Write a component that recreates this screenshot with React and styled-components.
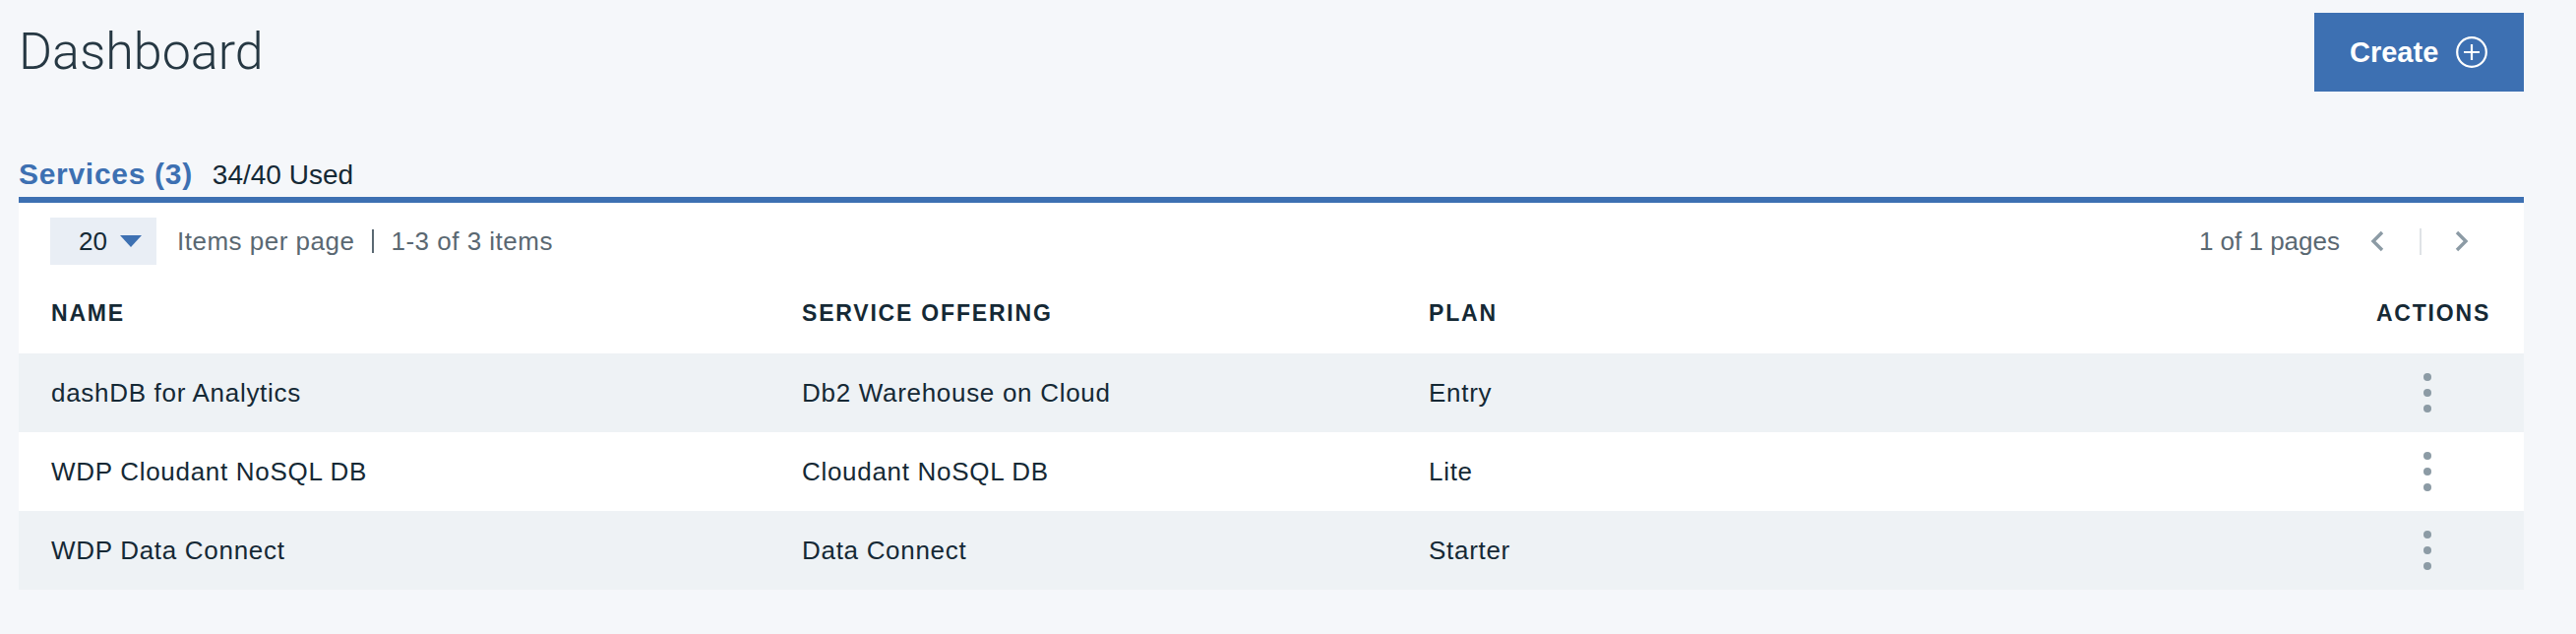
import styled, { createGlobalStyle } from "styled-components";

const GlobalStyle = createGlobalStyle`
  html, body {
    margin: 0;
    background: #f5f7fa;
  }
  body {
    font-family: "Liberation Sans", Arial, sans-serif;
    color: #152935;
  }
`;

const services = [
  { id: 1, name: "dashDB for Analytics", offering: "Db2 Warehouse on Cloud", plan: "Entry" },
  { id: 2, name: "WDP Cloudant NoSQL DB", offering: "Cloudant NoSQL DB", plan: "Lite" },
  { id: 3, name: "WDP Data Connect", offering: "Data Connect", plan: "Starter" },
];

function PlusCircle() {
  return (
    <svg width="32" height="32" viewBox="0 0 32 32" fill="none" stroke="#fff" strokeWidth="2.2">
      <circle cx="16" cy="16" r="14.8" />
      <path d="M16 8v16M8 16h16" />
    </svg>
  );
}

function Chevron({ dir }) {
  return (
    <svg width="14" height="22" viewBox="0 0 14 22" fill="none" stroke="#8c9ba5" strokeWidth="3.4">
      {dir === "left" ? <path d="M12 2 3 11l9 9" /> : <path d="M2 2l9 9-9 9" />}
    </svg>
  );
}

function Kebab() {
  return (
    <svg width="8" height="40" viewBox="0 0 8 40" fill="#8c9ba5">
      <circle cx="4" cy="4" r="4" />
      <circle cx="4" cy="20" r="4" />
      <circle cx="4" cy="36" r="4" />
    </svg>
  );
}

function App() {
  const rows = services.map((s, idx) => (
    <Row key={s.id} $striped={idx % 2 === 0}>
      <Cell>{s.name}</Cell>
      <Cell>{s.offering}</Cell>
      <Cell>{s.plan}</Cell>
      <ActionCell>
        <Kebab />
      </ActionCell>
    </Row>
  ));

  return (
    <Page>
      <GlobalStyle />
      <TopBar>
        <Title>Dashboard</Title>
        <CreateButton>
          Create
          <PlusCircle />
        </CreateButton>
      </TopBar>

      <TabBar>
        <TabTitle>Services (3)</TabTitle>
        <TabMeta>34/40 Used</TabMeta>
      </TabBar>

      <Panel>
        <Toolbar>
          <ToolGroup>
            <PageSize>
              20
              <Caret />
            </PageSize>
            <ToolText>Items per page</ToolText>
            <Pipe />
            <ToolText>1-3 of 3 items</ToolText>
          </ToolGroup>
          <ToolGroup>
            <ToolText $tight>1 of 1 pages</ToolText>
            <PagerButton $first>
              <Chevron dir="left" />
            </PagerButton>
            <PagerDivider />
            <PagerButton>
              <Chevron dir="right" />
            </PagerButton>
          </ToolGroup>
        </Toolbar>

        <HeadRow>
          <HeadCell>Name</HeadCell>
          <HeadCell>Service Offering</HeadCell>
          <HeadCell>Plan</HeadCell>
          <HeadCell $center>Actions</HeadCell>
        </HeadRow>
        {rows}
      </Panel>
    </Page>
  );
}

const Page = styled.div`
  padding: 13px 53px 0 19px;
  min-height: 644px;
  box-sizing: border-box;
`;

const TopBar = styled.header`
  display: flex;
  align-items: center;
  justify-content: space-between;
  height: 80px;
`;

const Title = styled.h1`
  margin: 0;
  font-family: Roboto, "Liberation Sans", sans-serif;
  font-weight: 300;
  font-size: 52px;
  line-height: 1;
  color: #263843;
`;

const CreateButton = styled.button`
  display: flex;
  align-items: center;
  gap: 18px;
  height: 80px;
  width: 213px;
  padding: 0 0 0 36px;
  box-sizing: border-box;
  border: 0;
  background: #3d70b2;
  color: #fff;
  font-family: "Liberation Sans", Arial, sans-serif;
  font-weight: bold;
  font-size: 29px;
  cursor: pointer;
`;

const TabBar = styled.div`
  display: flex;
  align-items: baseline;
  gap: 20px;
  margin-top: 67px;
  padding-bottom: 5px;
  line-height: 34px;
  border-bottom: 6px solid #3d70b2;
`;

const TabTitle = styled.span`
  font-weight: bold;
  font-size: 30px;
  letter-spacing: 0.7px;
  color: #3d70b2;
`;

const TabMeta = styled.span`
  font-size: 28px;
  color: #152935;
`;

const Panel = styled.section`
  background: #fff;
`;

const Toolbar = styled.div`
  display: flex;
  align-items: center;
  justify-content: space-between;
  padding: 15px 56px 13px 32px;
`;

const ToolGroup = styled.div`
  display: flex;
  align-items: center;
`;

const PageSize = styled.div`
  display: flex;
  align-items: center;
  gap: 13px;
  width: 108px;
  height: 48px;
  padding-left: 29px;
  box-sizing: border-box;
  background: #e9eef5;
  font-size: 26px;
  color: #152935;
  margin-right: 21px;
`;

const Caret = styled.span`
  width: 0;
  height: 0;
  border-left: 11.5px solid transparent;
  border-right: 11.5px solid transparent;
  border-top: 12px solid #3d70b2;
`;

const ToolText = styled.span`
  font-size: 26px;
  letter-spacing: ${(p) => (p.$tight ? "0" : "0.5px")};
  color: #5a6872;
`;

const Pipe = styled.span`
  width: 2px;
  height: 24px;
  margin: 0 17px 0 18px;
  background: #5a6872;
`;

const PagerButton = styled.span`
  display: flex;
  margin-left: ${(p) => (p.$first ? "31px" : "34px")};
  margin-right: ${(p) => (p.$first ? "36px" : "0")};
`;

const PagerDivider = styled.span`
  width: 2px;
  height: 27px;
  background: #dfe3e6;
`;

const Row = styled.div`
  display: grid;
  grid-template-columns: 763px 637px 1fr 120px;
  align-items: center;
  height: 80px;
  padding: 0 32px 0 33px;
  background: ${(p) => (p.$striped ? "#eef2f5" : "#fff")};
`;

const HeadRow = styled(Row)`
  height: 77px;
  padding-bottom: 5px;
  box-sizing: border-box;
`;

const HeadCell = styled.div`
  font-weight: bold;
  font-size: 23px;
  letter-spacing: 1.8px;
  text-transform: uppercase;
  color: #152935;
  text-align: ${(p) => (p.$center ? "center" : "left")};
`;

const Cell = styled.div`
  font-size: 26px;
  letter-spacing: 0.7px;
  color: #152935;
`;

const ActionCell = styled.div`
  display: flex;
  justify-content: center;
  padding-right: 12px;
`;

export default App;
